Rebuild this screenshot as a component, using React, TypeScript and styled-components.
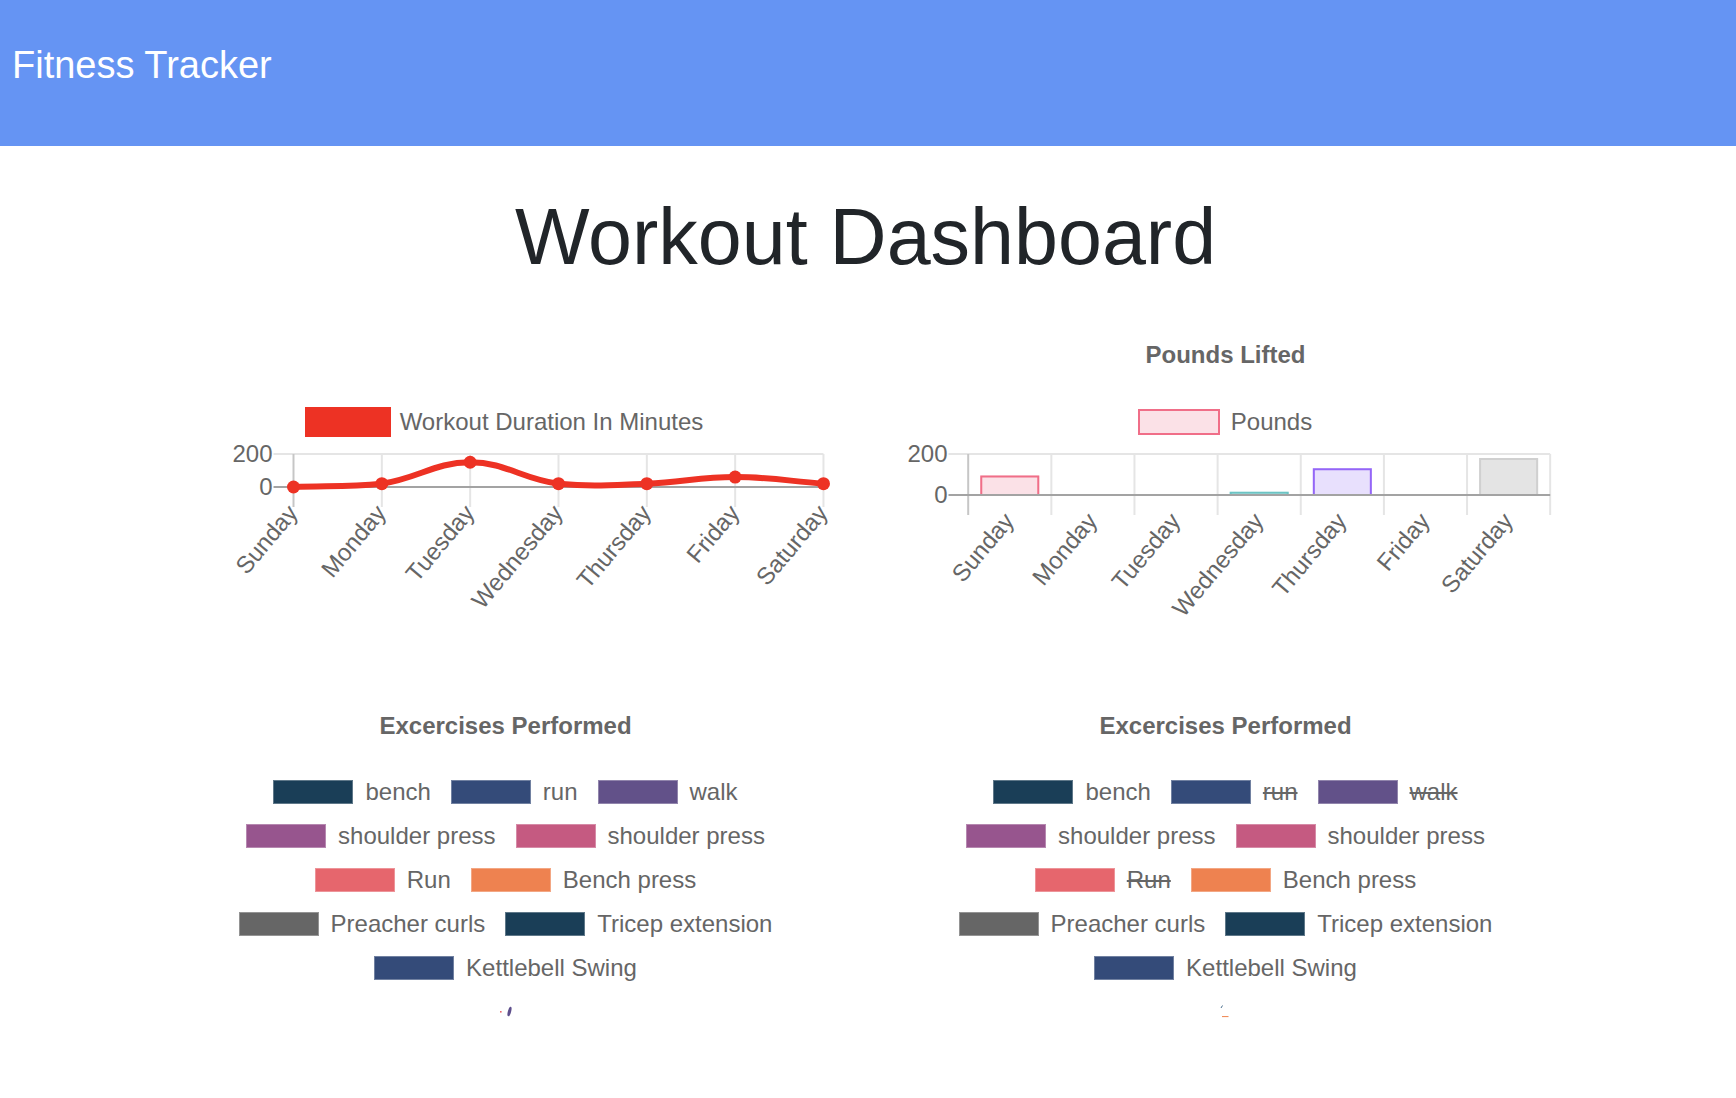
import React from "react";
import styled, { createGlobalStyle } from "styled-components";

const GlobalStyle = createGlobalStyle`
  body {
    margin: 0;
    background: #fff;
    font-family: "Liberation Sans", Arial, Helvetica, sans-serif;
  }
`;

const Navbar = styled.header`
  height: 146px;
  box-sizing: border-box;
  padding: 43px 12px 0;
  background: #6594f3;
`;

const Brand = styled.div`
  font-size: 38px;
  line-height: 45px;
  color: #fff;
`;

const Main = styled.main`
  padding-right: 5px;
`;

const Container = styled.div`
  width: 1440px;
  margin: 0 auto;
`;

const PageTitle = styled.h1`
  margin: 43.7px 0 0;
  font-size: 79px;
  line-height: 94.8px;
  font-weight: 400;
  text-align: center;
  color: #212529;
`;

const ChartGrid = styled.div`
  display: grid;
  grid-template-columns: 1fr 1fr;
  row-gap: 40.6px;
  margin-top: 36.5px;
`;

const ChartCard = styled.section`
  height: 330px;
  padding: 0 30px;
  display: flex;
  flex-direction: column;
`;

const ChartTitle = styled.h2`
  margin: 0;
  padding: 20px 0;
  min-height: 28.8px;
  font-size: 24px;
  line-height: 28.8px;
  font-weight: 700;
  color: #666;
  text-align: center;
`;

const Legend = styled.div`
  display: flex;
  flex-direction: column;
  align-items: center;
  gap: 20px;
  padding: 20px 0;
`;

const LegendRow = styled.div`
  display: flex;
  justify-content: center;
  gap: 20px;
`;

const LegendItem = styled.div`
  display: flex;
  align-items: center;
  gap: 12px;
`;

const Swatch = styled.span<{ $fill: string; $stroke?: string; $half?: number }>`
  flex: none;
  width: 80px;
  height: 24px;
  box-sizing: border-box;
  background: ${(p) => p.$fill};
  box-shadow: ${(p) =>
    p.$stroke
      ? `inset 0 0 0 ${p.$half}px ${p.$stroke}, 0 0 0 ${p.$half}px ${p.$stroke}`
      : "inset 0 0 0 1px rgba(255,255,255,0.3)"};
`;

const LegendLabel = styled.span<{ $hidden?: boolean }>`
  font-size: 24px;
  line-height: 24px;
  color: #666;
  white-space: nowrap;
  text-decoration: ${(p) => (p.$hidden ? "line-through" : "none")};
  text-decoration-thickness: 2px;
`;

const Plot = styled.svg`
  display: block;
  width: 660px;
  overflow: visible;
  font-family: "Liberation Sans", Arial, Helvetica, sans-serif;
`;

const DAYS = ["Sunday", "Monday", "Tuesday", "Wednesday", "Thursday", "Friday", "Saturday"];

const GRID = "#e5e5e5";
const ZERO = "#a3a3a3";
const FIRST = "#c6c6c6";
const TEXT = "#666";

type Pt = [number, number];

function splinePath(pts: Pt[], tension: number, top: number, bottom: number) {
  const clamp = (v: number) => Math.min(bottom, Math.max(top, v));
  const cps = pts.map((p, i) => {
    const prev = pts[i - 1] ?? p;
    const next = pts[i + 1] ?? p;
    const d01 = Math.hypot(p[0] - prev[0], p[1] - prev[1]);
    const d12 = Math.hypot(next[0] - p[0], next[1] - p[1]);
    const s01 = d01 + d12 ? d01 / (d01 + d12) : 0;
    const s12 = d01 + d12 ? d12 / (d01 + d12) : 0;
    const fa = tension * s01;
    const fb = tension * s12;
    return {
      in: [p[0] - fa * (next[0] - prev[0]), clamp(p[1] - fa * (next[1] - prev[1]))],
      out: [p[0] + fb * (next[0] - prev[0]), clamp(p[1] + fb * (next[1] - prev[1]))],
    };
  });
  let d = `M${pts[0][0]},${pts[0][1]}`;
  for (let i = 1; i < pts.length; i++) {
    const a = cps[i - 1].out;
    const b = cps[i].in;
    d += ` C${a[0]},${a[1]} ${b[0]},${b[1]} ${pts[i][0]},${pts[i][1]}`;
  }
  return d;
}

// x axis labels, rotated 50deg like chart.js does when they don't fit
function DayLabels({ xs, y }: { xs: number[]; y: number }) {
  return (
    <g fontSize={24} fill={TEXT}>
      {xs.map((x, i) => {
        const ax = x - 1;
        const ay = y + 1;
        return (
          <text
            key={DAYS[i]}
            x={ax}
            y={ay}
            textAnchor="end"
            dominantBaseline="central"
            transform={`rotate(-50 ${ax} ${ay})`}
          >
            {DAYS[i]}
          </text>
        );
      })}
    </g>
  );
}

function DurationChart() {
  const tickStart = 97.5;
  const x0 = 117.5;
  const step = 88.33;
  const zeroY = 33;
  const tickBottom = 53;
  const minutes = [0, 20, 150, 20, 20, 60, 20];
  const xs = DAYS.map((_, i) => x0 + i * step);
  const pts: Pt[] = minutes.map((m, i) => [xs[i], zeroY - (m / 200) * zeroY]);
  const right = xs[xs.length - 1];

  return (
    <Plot height={197} viewBox="0 0 660 197">
      <line x1={tickStart} y1={0} x2={right} y2={0} stroke={GRID} strokeWidth={2} />
      {xs.map((x, i) => (
        <line key={i} x1={x} y1={0} x2={x} y2={tickBottom} stroke={i === 0 ? FIRST : GRID} strokeWidth={2} />
      ))}
      <line x1={tickStart} y1={zeroY} x2={right} y2={zeroY} stroke={ZERO} strokeWidth={2} />
      <g fontSize={24} fill={TEXT} textAnchor="end" dominantBaseline="central">
        <text x={tickStart - 1} y={-1}>200</text>
        <text x={tickStart - 1} y={zeroY - 1}>0</text>
      </g>
      <path d={splinePath(pts, 0.4, 0, zeroY)} fill="none" stroke="#ed3224" strokeWidth={6} />
      {pts.map((p, i) => (
        <circle key={i} cx={p[0]} cy={p[1]} r={6.5} fill="#ed3224" />
      ))}
      <DayLabels xs={xs} y={tickBottom} />
    </Plot>
  );
}

const BARS = [
  { value: 95, fill: "#fbe1e7", stroke: "#f06e88" },
  { value: 0, fill: "#ffecd9", stroke: "#ff9f40" },
  { value: 0, fill: "#fff5dd", stroke: "#ffcd56" },
  { value: 16, fill: "#dcf2f2", stroke: "#6cc4c4" },
  { value: 130, fill: "#e8e0fd", stroke: "#9466f7" },
  { value: 0, fill: "#d7ecfb", stroke: "#36a2eb" },
  { value: 180, fill: "#e4e4e4", stroke: "#d0d0d0" },
];

function PoundsChart() {
  const tickStart = 52.5;
  const x0 = 72.2;
  const step = 83.14;
  const zeroY = 41;
  const tickBottom = 61;
  const lines = Array.from({ length: 8 }, (_, i) => x0 + i * step);
  const centers = DAYS.map((_, i) => x0 + (i + 0.5) * step);
  const right = lines[lines.length - 1];
  const barW = 59;

  return (
    <Plot height={197} viewBox="0 0 660 197">
      <line x1={tickStart} y1={0} x2={right} y2={0} stroke={GRID} strokeWidth={2} />
      {lines.map((x, i) => (
        <line key={i} x1={x} y1={0} x2={x} y2={tickBottom} stroke={i === 0 ? FIRST : GRID} strokeWidth={2} />
      ))}
      {BARS.map((b, i) => {
        if (!b.value) return null;
        const h = (b.value / 200) * zeroY;
        const x = centers[i] - barW / 2;
        const top = zeroY - h;
        return (
          <g key={i}>
            <rect x={x} y={top} width={barW} height={h} fill={b.fill} />
            <path
              d={`M${x + 1},${zeroY} V${top + 1} H${x + barW - 1} V${zeroY}`}
              fill="none"
              stroke={b.stroke}
              strokeWidth={2}
            />
          </g>
        );
      })}
      <line x1={tickStart} y1={zeroY} x2={right} y2={zeroY} stroke={ZERO} strokeWidth={2} />
      <g fontSize={24} fill={TEXT} textAnchor="end" dominantBaseline="central">
        <text x={tickStart - 1} y={-1}>200</text>
        <text x={tickStart - 1} y={zeroY - 1}>0</text>
      </g>
      <DayLabels xs={centers} y={tickBottom} />
    </Plot>
  );
}

type Exercise = { name: string; color: string };

const EXERCISE_ROWS: Exercise[][] = [
  [
    { name: "bench", color: "#1a3e57" },
    { name: "run", color: "#344b79" },
    { name: "walk", color: "#625189" },
  ],
  [
    { name: "shoulder press", color: "#97558e" },
    { name: "shoulder press", color: "#c55a81" },
  ],
  [
    { name: "Run", color: "#e6666d" },
    { name: "Bench press", color: "#ee8250" },
  ],
  [
    { name: "Preacher curls", color: "#666666" },
    { name: "Tricep extension", color: "#1a3e57" },
  ],
  [{ name: "Kettlebell Swing", color: "#344b79" }],
];

function ExerciseLegend({ hidden = [] }: { hidden?: string[] }) {
  return (
    <Legend>
      {EXERCISE_ROWS.map((row, r) => (
        <LegendRow key={r}>
          {row.map((ex, i) => (
            <LegendItem key={i}>
              <Swatch $fill={ex.color} />
              <LegendLabel $hidden={hidden.includes(ex.name)}>{ex.name}</LegendLabel>
            </LegendItem>
          ))}
        </LegendRow>
      ))}
    </Legend>
  );
}

// the doughnut has almost no room left under the legend, only slivers show
function PieRemnant({ variant }: { variant: "left" | "right" }) {
  return (
    <Plot height={21} viewBox="0 0 660 21">
      {variant === "left" ? (
        <>
          <ellipse cx={333.5} cy={11.5} rx={1.6} ry={5} transform="rotate(15 333.5 11.5)" fill="#5e4f8c" />
          <rect x={324} y={11} width={1.6} height={1.6} fill="#e6666d" />
        </>
      ) : (
        <>
          <line x1={325} y1={8} x2={326.5} y2={5.5} stroke="#4a6f8e" strokeWidth={1} />
          <line x1={326} y1={16.6} x2={332.5} y2={16.6} stroke="#ef834d" strokeWidth={1} />
        </>
      )}
    </Plot>
  );
}

export default function App() {
  return (
    <>
      <GlobalStyle />
      <Navbar>
        <Brand>Fitness Tracker</Brand>
      </Navbar>
      <Main>
        <Container>
          <PageTitle>Workout Dashboard</PageTitle>
          <ChartGrid>
            <ChartCard>
              <ChartTitle />
              <Legend>
                <LegendItem>
                  <Swatch $fill="#ed3224" $stroke="#ed3224" $half={3} />
                  <LegendLabel>Workout Duration In Minutes</LegendLabel>
                </LegendItem>
              </Legend>
              <DurationChart />
            </ChartCard>
            <ChartCard>
              <ChartTitle>Pounds Lifted</ChartTitle>
              <Legend>
                <LegendItem>
                  <Swatch $fill="#fbe1e7" $stroke="#f06e88" $half={1} />
                  <LegendLabel>Pounds</LegendLabel>
                </LegendItem>
              </Legend>
              <PoundsChart />
            </ChartCard>
            <ChartCard>
              <ChartTitle>Excercises Performed</ChartTitle>
              <ExerciseLegend />
              <PieRemnant variant="left" />
            </ChartCard>
            <ChartCard>
              <ChartTitle>Excercises Performed</ChartTitle>
              <ExerciseLegend hidden={["run", "walk", "Run"]} />
              <PieRemnant variant="right" />
            </ChartCard>
          </ChartGrid>
        </Container>
      </Main>
    </>
  );
}
